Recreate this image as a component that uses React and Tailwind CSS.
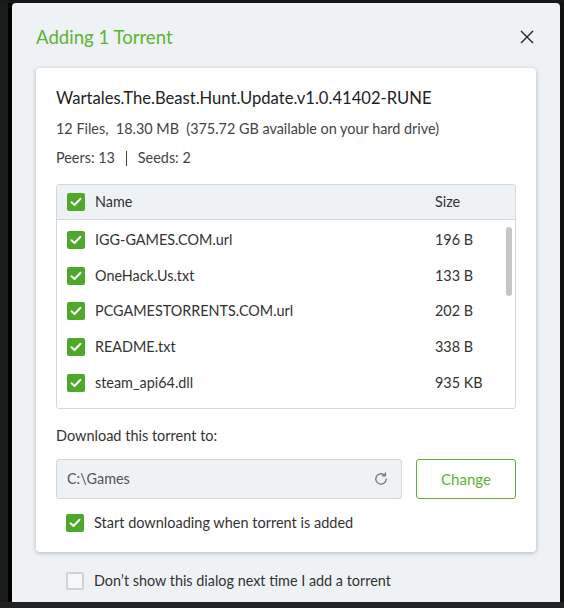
import React from 'react';

const files = [
  { name: 'IGG-GAMES.COM.url', size: '196 B' },
  { name: 'OneHack.Us.txt', size: '133 B' },
  { name: 'PCGAMESTORRENTS.COM.url', size: '202 B' },
  { name: 'README.txt', size: '338 B' },
  { name: 'steam_api64.dll', size: '935 KB' },
];

const Check = ({ checked = true }) =>
  checked ? (
    <span className="flex h-[18px] w-[18px] shrink-0 items-center justify-center rounded-[2px] bg-[#4ea82a]">
      <svg width="12" height="10" viewBox="0 0 12 10" fill="none">
        <path d="M1.5 5.2 4.5 8 10.5 1.8" stroke="white" strokeWidth="2" strokeLinecap="round" strokeLinejoin="round" />
      </svg>
    </span>
  ) : (
    <span className="h-[18px] w-[18px] shrink-0 rounded-[2px] border-2 border-[#cfd4d9] bg-[#f6f8fa]" />
  );

const App = () => {
  return (
    <div className="flex h-[608px] w-[564px] flex-col bg-[#161817] font-['Lato',sans-serif] text-[#333]">
      <div className="flex flex-1 pt-[3px]">
        <div className="w-[8px] bg-[#1a1c1b]" />
        <div className="w-[4px] bg-black" />
        {/* dialog */}
        <div className="flex w-[548px] flex-col rounded-t-[4px] bg-[#eef2f5]">
          <div className="flex h-[65px] items-center justify-between pl-[24px] pr-[26px] pt-[4px]">
            <h1 className="text-[18.6px] text-[#5cb431]">Adding 1 Torrent</h1>
            <svg width="14" height="14" viewBox="0 0 14 14" className="-mt-[1px]">
              <path d="M1 1 13 13M13 1 1 13" stroke="#222" strokeWidth="1.4" />
            </svg>
          </div>

          <div className="mx-[24px] flex flex-col rounded-[4px] bg-white px-[20px] pt-[19px] pb-[18px] shadow-[0_1px_4px_rgba(0,0,0,0.25)]">
            <div className="text-[16.6px] leading-[22px] text-[#222]">Wartales.The.Beast.Hunt.Update.v1.0.41402-RUNE</div>
            <div className="mt-[11px] text-[14.4px] leading-[18px] text-[#444]">
              12 Files,&nbsp; 18.30 MB&nbsp; (375.72 GB available on your hard drive)
            </div>
            <div className="mt-[11px] flex items-center text-[14.4px] leading-[18px] text-[#444]">
              <span>Peers: 13</span>
              <span className="mx-[11px] h-[15px] w-px bg-[#444]" />
              <span>Seeds: 2</span>
            </div>

            <div className="mt-[17px] overflow-hidden rounded-[3px] border border-[#d3d8dc]">
              <div className="flex h-[35px] items-center border-b border-[#d3d8dc] bg-[#eef2f5] pl-[10px] text-[14.4px]">
                <Check />
                <span className="ml-[10px] flex-1">Name</span>
                <span className="w-[80px]">Size</span>
              </div>
              <div className="relative h-[186px]">
                {files.map((f) => (
                  <div key={f.name} className="flex h-[35.7px] items-center pl-[10px] text-[14.4px] first:mt-[2px]">
                    <Check />
                    <span className="ml-[10px] flex-1">{f.name}</span>
                    <span className="w-[80px]">{f.size}</span>
                  </div>
                ))}
                <div className="absolute right-[3px] top-[5px] h-[69px] w-[6px] rounded-full bg-[#c6c6c6]" />
              </div>
            </div>

            <div className="mt-[18px] text-[14.5px] leading-[18px]">Download this torrent to:</div>
            <div className="mt-[14px] flex gap-[14px]">
              <div className="flex h-[40px] flex-1 items-center justify-between rounded-[3px] border border-[#d3d8dc] bg-[#eef2f5] pl-[10px] pr-[12px] text-[14.4px] text-[#555]">
                <span>C:\Games</span>
                <svg width="16" height="16" viewBox="0 0 16 16" fill="none">
                  <path d="M13.2 8a5.2 5.2 0 1 1-1.6-3.8" stroke="#777" strokeWidth="1.3" strokeLinecap="round" />
                  <path d="M12.4 1.8v3h-3" stroke="#777" strokeWidth="1.3" strokeLinecap="round" strokeLinejoin="round" />
                </svg>
              </div>
              <button className="h-[40px] w-[100px] rounded-[3px] border border-[#5cb431] text-[15px] text-[#5cb431]">Change</button>
            </div>
            <div className="mt-[13px] flex items-center pl-[10px] text-[14.5px]">
              <Check />
              <span className="ml-[10px]">Start downloading when torrent is added</span>
            </div>
          </div>

          <div className="mt-[18px] flex items-center pl-[54px] text-[14.4px]">
            <Check checked={false} />
            <span className="ml-[10px]">Don’t show this dialog next time I add a torrent</span>
          </div>
        </div>
        <div className="w-[4px] bg-[#111]" />
      </div>
      <div className="h-[6px] bg-[#222]" />
    </div>
  );
};

export default App;
